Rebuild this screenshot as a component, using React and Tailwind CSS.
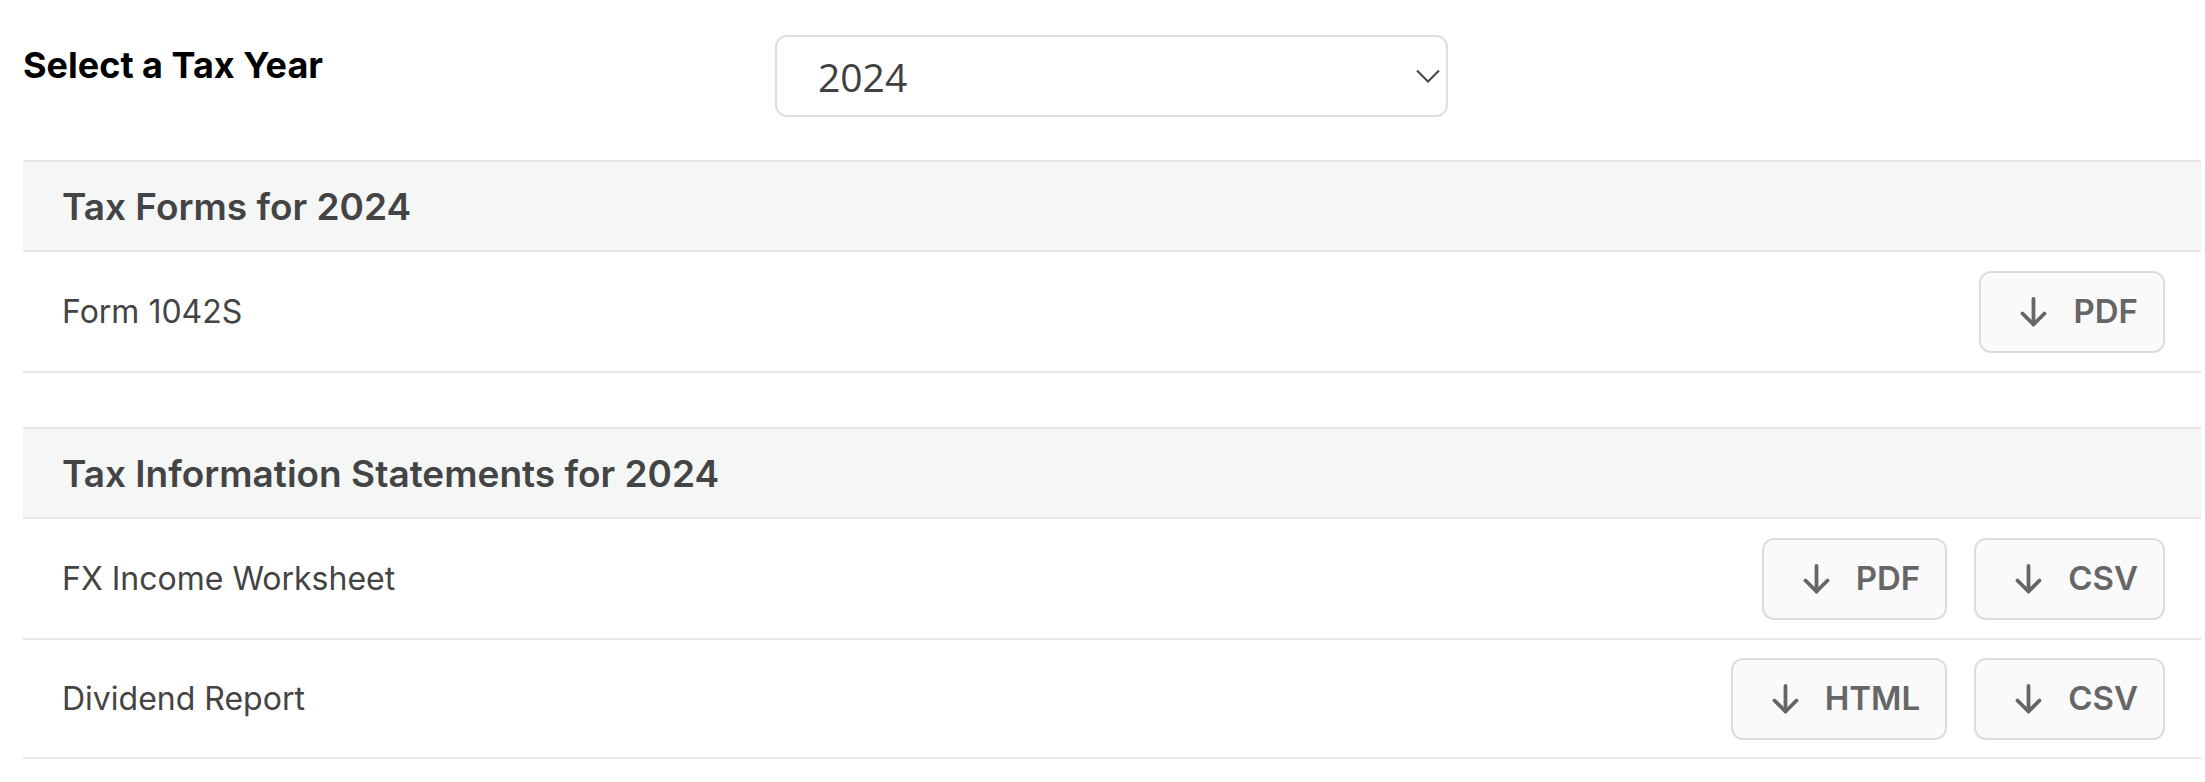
import React from "react";

function ArrowDown() {
  return (
    <svg width="27" height="30" viewBox="0 0 27 30" fill="none" stroke="#666666" strokeWidth="3.8" strokeLinecap="round" strokeLinejoin="round">
      <path d="M13.5 2 V27.5" />
      <path d="M2.5 16.5 L13.5 27.5 L24.5 16.5" />
    </svg>
  );
}

function DlButton({ label }) {
  return (
    <button className="h-[82px] border-2 border-[#dcdcdc] bg-[#fafafa] rounded-[12px] flex items-center pl-[39px] pr-[25px] gap-[26px] text-[#666666] text-[33px] font-semibold leading-none">
      <ArrowDown />
      <span>{label}</span>
    </button>
  );
}

function Row({ title, buttons, h }) {
  return (
    <div className={`flex items-center justify-between border-b-2 border-[#e6e6e6] pl-[39px] pr-[36px] ${h}`}>
      <span className="text-[32px] text-[#444444] leading-none">{title}</span>
      <div className="flex gap-[27px]">
        {buttons.map((b, i) => (
          <DlButton key={i} label={b} />
        ))}
      </div>
    </div>
  );
}

function Header({ children }) {
  return (
    <div className="h-[92px] border-y-2 border-[#e6e6e6] bg-[#f5f7f7] flex items-center pl-[39px]">
      <span className="text-[37px] font-semibold text-[#444444] leading-none">{children}</span>
    </div>
  );
}

export default function App() {
  return (
    <div className="w-[2205px] min-h-[782px] bg-white pl-[23px] pr-[4px] font-[family-name:Inter,sans-serif]">
      <div className="flex items-start pt-[35px] pb-[43px]">
        <div className="w-[752px] mt-[9px] text-[36px] leading-[43px] font-bold text-black">Select a Tax Year</div>
        <div className="w-[673px] h-[82px] border-2 border-[#dedede] rounded-[12px] flex items-center justify-between pl-[41px] pr-[6px]">
          <span className="font-[family-name:'Open_Sans',sans-serif] text-[39px] text-[#404040] leading-none">2024</span>
          <svg width="24" height="14" viewBox="0 0 24 14" fill="none" stroke="#444444" strokeWidth="2">
            <path d="M1 1.5 L12 12.5 L23 1.5" />
          </svg>
        </div>
      </div>

      <div>
        <Header>Tax Forms for 2024</Header>
        <Row title="Form 1042S" buttons={["PDF"]} h="h-[121px]" />
      </div>

      <div className="mt-[54px]">
        <Header>Tax Information Statements for 2024</Header>
        <Row title="FX Income Worksheet" buttons={["PDF", "CSV"]} h="h-[121px]" />
        <Row title="Dividend Report" buttons={["HTML", "CSV"]} h="h-[119px]" />
      </div>
    </div>
  );
}
